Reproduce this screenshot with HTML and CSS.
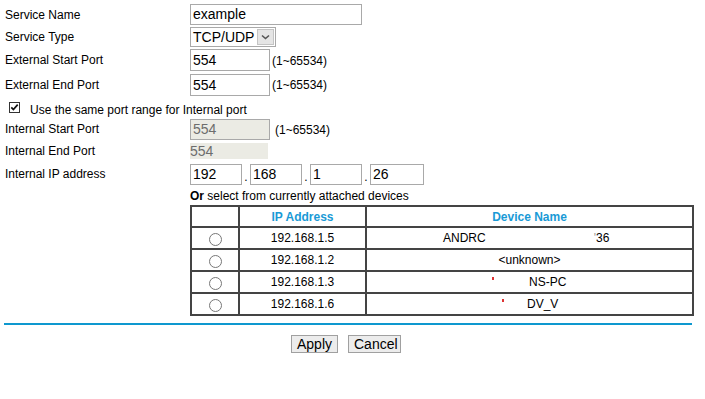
FILE: index.html
```html
<!DOCTYPE html>
<html>
<head>
<meta charset="utf-8">
<link rel="stylesheet" href="styles.css">
</head>
<body>
<div class="page">
  <div class="row r1">
    <div class="label">Service Name</div>
    <div class="field"><div class="input wide">example</div></div>
  </div>
  <div class="row r2">
    <div class="label">Service Type</div>
    <div class="field">
      <div class="select"><span class="sel-text">TCP/UDP</span><span class="arrow"><svg width="9" height="6" viewBox="0 0 9 6"><path d="M1 1.5 L4.5 4.5 L8 1.5" fill="none" stroke="#555" stroke-width="1.6"/></svg></span></div>
    </div>
  </div>
  <div class="row r3">
    <div class="label">External Start Port</div>
    <div class="field"><div class="input port">554</div><span class="hint">(1~65534)</span></div>
  </div>
  <div class="row r4">
    <div class="label">External End Port</div>
    <div class="field"><div class="input port">554</div><span class="hint">(1~65534)</span></div>
  </div>
  <div class="row r5">
    <span class="check"><svg width="11" height="11" viewBox="0 0 11 11"><rect x="0.5" y="0.5" width="10" height="10" fill="#fff" stroke="#333"/><path d="M2.3 5.4 L4.4 7.6 L8.7 2.6" fill="none" stroke="#111" stroke-width="1.7"/></svg></span>
    <span class="check-label">Use the same port range for Internal port</span>
  </div>
  <div class="row r6">
    <div class="label">Internal Start Port</div>
    <div class="field"><div class="input port disabled">554</div><span class="hint gap">(1~65534)</span></div>
  </div>
  <div class="row r7">
    <div class="label">Internal End Port</div>
    <div class="field"><div class="static">554</div></div>
  </div>
  <div class="row r8">
    <div class="label">Internal IP address</div>
    <div class="field ip">
      <div class="input oct">192</div><span class="dot">.</span>
      <div class="input oct">168</div><span class="dot">.</span>
      <div class="input oct">1</div><span class="dot">.</span>
      <div class="input oct last">26</div>
    </div>
  </div>
  <div class="devices">
    <div class="or-line"><b>Or</b> select from currently attached devices</div>
    <table class="dev-table">
      <tr class="head">
        <th class="c1"></th>
        <th class="c2">IP Address</th>
        <th class="c3">Device Name</th>
      </tr>
      <tr>
        <td class="c1"><span class="radio"></span></td>
        <td class="c2">192.168.1.5</td>
        <td class="c3 left"><span class="pad76"></span>ANDRC<span class="sp112"></span><span class="faint">'</span>36</td>
      </tr>
      <tr>
        <td class="c1"><span class="radio"></span></td>
        <td class="c2">192.168.1.2</td>
        <td class="c3">&lt;unknown&gt;</td>
      </tr>
      <tr>
        <td class="c1"><span class="radio"></span></td>
        <td class="c2">192.168.1.3</td>
        <td class="c3 left"><span class="pad125"></span><span class="red"></span><span class="sp37"></span>NS-PC</td>
      </tr>
      <tr>
        <td class="c1"><span class="radio"></span></td>
        <td class="c2">192.168.1.6</td>
        <td class="c3 left"><span class="pad135"></span><span class="red"></span><span class="sp23"></span>DV_V</td>
      </tr>
    </table>
  </div>
  <div class="rule"></div>
  <div class="buttons">
    <button class="btn apply">Apply</button>
    <button class="btn cancel">Cancel</button>
  </div>
</div>
</body>
</html>
```
FILE: styles.css
```css
html, body {
  margin: 0;
  padding: 0;
  background: #fff;
}
body {
  font-family: "Liberation Sans", Arial, sans-serif;
  font-size: 12px;
  color: #000;
}
.page {
  width: 705px;
  padding-top: 3px;
}
.row {
  display: flex;
  align-items: center;
}
.r1 { height: 23px; }
.r2 { height: 22px; }
.r3 { height: 24px; }
.r4 { height: 25px; }
.r5 { height: 21px; }
.r6 { height: 22px; }
.r7 { height: 22px; }
.r8 { height: 24px; }
.label {
  width: 190px;
  padding-left: 5px;
  box-sizing: border-box;
  flex: none;
}
.field {
  display: flex;
  align-items: center;
}
.input {
  box-sizing: border-box;
  border: 1px solid #a9a9a9;
  height: 21px;
  font-size: 14px;
  line-height: 19px;
  padding-left: 2px;
  background: #fff;
}
.wide { width: 172px; }
.port { width: 80px; height: 22px; line-height: 20px; }
.disabled {
  background: #ebebe4;
  color: #6d6d6d;
  height: 21px;
  line-height: 19px;
}
.hint { margin-left: 2px; padding-top: 1px; }
.hint.gap { margin-left: 5px; }
.select {
  box-sizing: border-box;
  width: 86px;
  height: 20px;
  border: 1px solid #a9a9a9;
  display: flex;
  align-items: center;
  justify-content: space-between;
  padding: 0 1px 0 2px;
  font-size: 14px;
}
.arrow {
  box-sizing: border-box;
  width: 17px;
  height: 16px;
  background: #e5e5e5;
  border: 1px solid #c4c4c4;
  display: flex;
  align-items: center;
  justify-content: center;
}
.check {
  display: inline-flex;
  margin-left: 9px;
  margin-top: -1px;
}
.check-label {
  margin-left: 10px;
  padding-top: 5px;
}
.static {
  width: 78px;
  height: 16px;
  background: #ebebe4;
  color: #6d6d6d;
  font-size: 14px;
  line-height: 16px;
  padding-left: 0;
}
.oct { width: 52px; height: 21px; }
.oct.last { width: 54px; }
.dot {
  width: 8px;
  text-align: center;
  padding-top: 6px;
}
.devices {
  margin-left: 190px;
}
.or-line {
  height: 19px;
  line-height: 21px;
}
.dev-table {
  border-collapse: collapse;
  width: 504px;
  border: 2px solid #444;
}
.dev-table th, .dev-table td {
  border: 2px solid #444;
  padding: 0;
  text-align: center;
  font-size: 12px;
}
.dev-table th {
  color: #1a9ad6;
  font-weight: bold;
  height: 19px;
}
.dev-table td {
  height: 20px;
}
.c1 { width: 46px; }
.c2 { width: 125px; }
.dev-table td.left { text-align: left; }
.radio {
  display: inline-block;
  box-sizing: border-box;
  width: 13px;
  height: 13px;
  border: 1px solid #777;
  border-radius: 50%;
  vertical-align: middle;
  margin-top: 3px;
}
.pad76 { display: inline-block; width: 76px; }
.pad125 { display: inline-block; width: 125px; }
.pad135 { display: inline-block; width: 135px; }
.sp112 { display: inline-block; width: 108px; }
.sp37 { display: inline-block; width: 35px; }
.sp23 { display: inline-block; width: 23px; }
.faint { color: #999; }
.red {
  display: inline-block;
  width: 2px;
  height: 3px;
  background: #d33;
  vertical-align: 6px;
}
.rule {
  margin: 7px 0 0 4px;
  width: 688px;
  height: 2px;
  background: #0e98cf;
}
.buttons {
  display: flex;
  justify-content: flex-start;
  gap: 10px;
  margin-top: 10px;
  padding-left: 291px;
}
.btn {
  font-family: "Liberation Sans", Arial, sans-serif;
  font-size: 14px;
  height: 18px;
  line-height: 14px;
  padding: 0 5px;
  background: #ececec;
  border: 1px solid #a0a0a0;
  border-radius: 0;
  color: #000;
  margin: 0;
}
.apply { width: 47px; }
.cancel { width: 53px; }
```
